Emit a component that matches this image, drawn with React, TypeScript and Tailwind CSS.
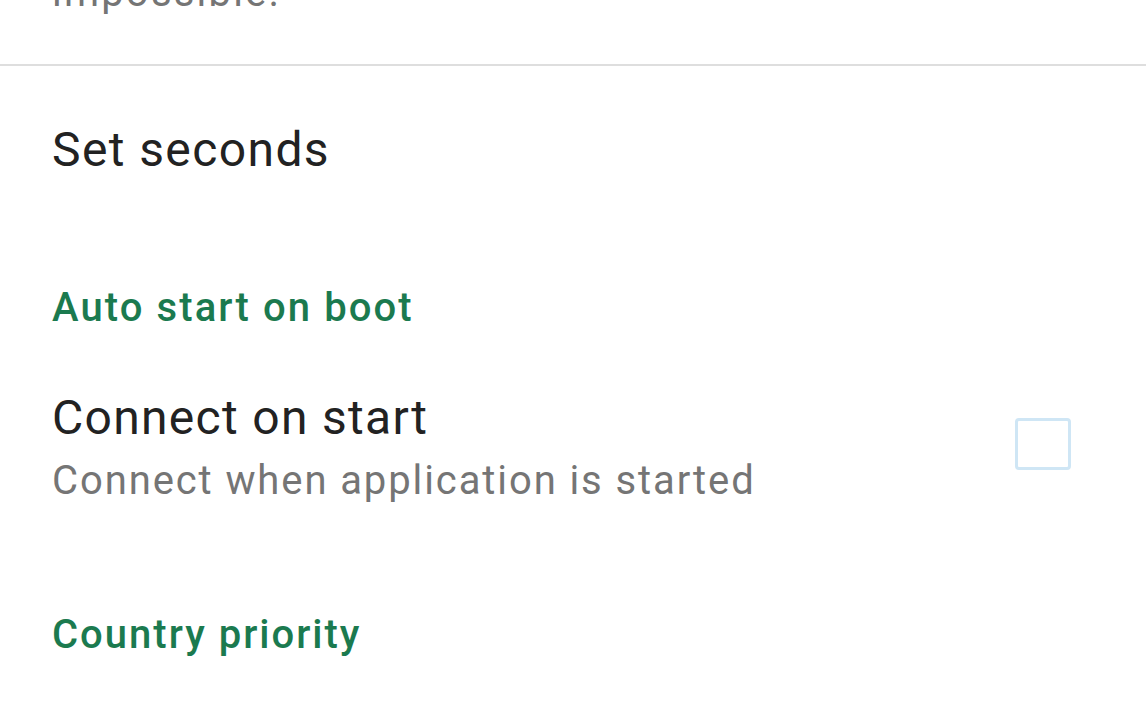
import React from "react";

export default function App() {
  return (
    <div
      className="w-[1146px] h-[716px] bg-white overflow-hidden flex flex-col"
      style={{ fontFamily: "Roboto, 'Noto Sans', sans-serif" }}
    >
      <div className="h-[64px] overflow-hidden pl-[52px]">
        <p className="mt-[-27px] text-[40px] leading-[40px] tracking-[2.2px] text-[#757575]">impossible.</p>
      </div>
      <div className="h-[2px] bg-[#dedede]" />
      <div className="pl-[52px] mt-[60px] text-[48px] leading-[48px] tracking-[1.4px] text-[#222222]">Set seconds</div>
      <div className="pl-[52px] mt-[114px] text-[40px] leading-[40px] tracking-[2.1px] font-medium text-[#1b7a4f]">
        Auto start on boot
      </div>
      <div className="mt-[66px] flex items-start justify-between pl-[52px] pr-[75px]">
        <div className="flex flex-col">
          <div className="text-[48px] leading-[48px] tracking-[1.3px] text-[#222222]">Connect on start</div>
          <div className="mt-[19px] text-[40px] leading-[40px] tracking-[1.9px] text-[#757575]">
            Connect when application is started
          </div>
        </div>
        <div className="mt-[24px] w-[56px] h-[52px] border-[3px] border-[#cfe6f5] rounded-[4px]" />
      </div>
      <div className="pl-[52px] mt-[114px] text-[40px] leading-[40px] tracking-[2px] font-medium text-[#1b7a4f]">
        Country priority
      </div>
    </div>
  );
}
